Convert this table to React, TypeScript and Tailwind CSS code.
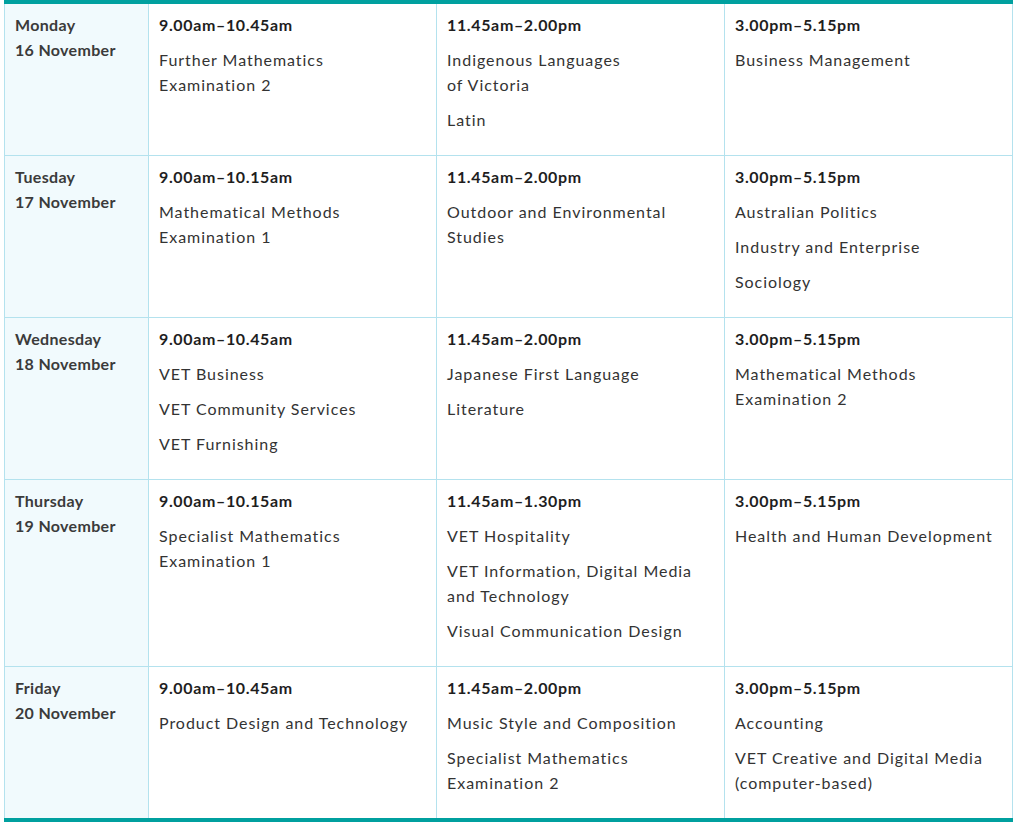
import * as React from "react";

type Session = { time: string; subjects: string[][] };
type Day = { day: string; date: string; sessions: Session[] };

const DAYS: Day[] = [
  {
    day: "Monday",
    date: "16 November",
    sessions: [
      { time: "9.00am–10.45am", subjects: [["Further Mathematics", "Examination 2"]] },
      { time: "11.45am–2.00pm", subjects: [["Indigenous Languages", "of Victoria"], ["Latin"]] },
      { time: "3.00pm–5.15pm", subjects: [["Business Management"]] },
    ],
  },
  {
    day: "Tuesday",
    date: "17 November",
    sessions: [
      { time: "9.00am–10.15am", subjects: [["Mathematical Methods", "Examination 1"]] },
      { time: "11.45am–2.00pm", subjects: [["Outdoor and Environmental", "Studies"]] },
      { time: "3.00pm–5.15pm", subjects: [["Australian Politics"], ["Industry and Enterprise"], ["Sociology"]] },
    ],
  },
  {
    day: "Wednesday",
    date: "18 November",
    sessions: [
      { time: "9.00am–10.45am", subjects: [["VET Business"], ["VET Community Services"], ["VET Furnishing"]] },
      { time: "11.45am–2.00pm", subjects: [["Japanese First Language"], ["Literature"]] },
      { time: "3.00pm–5.15pm", subjects: [["Mathematical Methods", "Examination 2"]] },
    ],
  },
  {
    day: "Thursday",
    date: "19 November",
    sessions: [
      { time: "9.00am–10.15am", subjects: [["Specialist Mathematics", "Examination 1"]] },
      {
        time: "11.45am–1.30pm",
        subjects: [["VET Hospitality"], ["VET Information, Digital Media", "and Technology"], ["Visual Communication Design"]],
      },
      { time: "3.00pm–5.15pm", subjects: [["Health and Human Development"]] },
    ],
  },
  {
    day: "Friday",
    date: "20 November",
    sessions: [
      { time: "9.00am–10.45am", subjects: [["Product Design and Technology"]] },
      { time: "11.45am–2.00pm", subjects: [["Music Style and Composition"], ["Specialist Mathematics", "Examination 2"]] },
      { time: "3.00pm–5.15pm", subjects: [["Accounting"], ["VET Creative and Digital Media", "(computer-based)"]] },
    ],
  },
];

export default function App() {
  return (
    <div className="min-h-[822px] bg-white pl-[4px] font-['Lato','Liberation_Sans',sans-serif] text-[16px] leading-[25px]">
      <div className="w-[1009px] border-t-4 border-b-4 border-[#00a09f]">
        {DAYS.map((d, i) => (
          <div
            key={d.day}
            className={
              "grid grid-cols-[145px_288px_288px_288px] " +
              (i < DAYS.length - 1 ? "border-b border-[#b4e2ee]" : "")
            }
          >
            <div className="border-x border-[#b4e2ee] bg-[#f1fafd] pt-[8px] pb-[23px] pl-[10px] font-bold tracking-[0.02em] text-[#3b3b3b]">
              <div>{d.day}</div>
              <div>{d.date}</div>
            </div>
            {d.sessions.map((s) => (
              <div key={s.time} className="border-r border-[#b4e2ee] pt-[8px] pb-[23px] pl-[10px] pr-2">
                <div className="font-bold tracking-[0.04em] text-[#1e1e1e]">{s.time}</div>
                {s.subjects.map((lines) => (
                  <div key={lines[0]} className="mt-[10px] tracking-[0.06em] text-[#333]">
                    {lines.map((l) => (
                      <div key={l}>{l}</div>
                    ))}
                  </div>
                ))}
              </div>
            ))}
          </div>
        ))}
      </div>
    </div>
  );
}
